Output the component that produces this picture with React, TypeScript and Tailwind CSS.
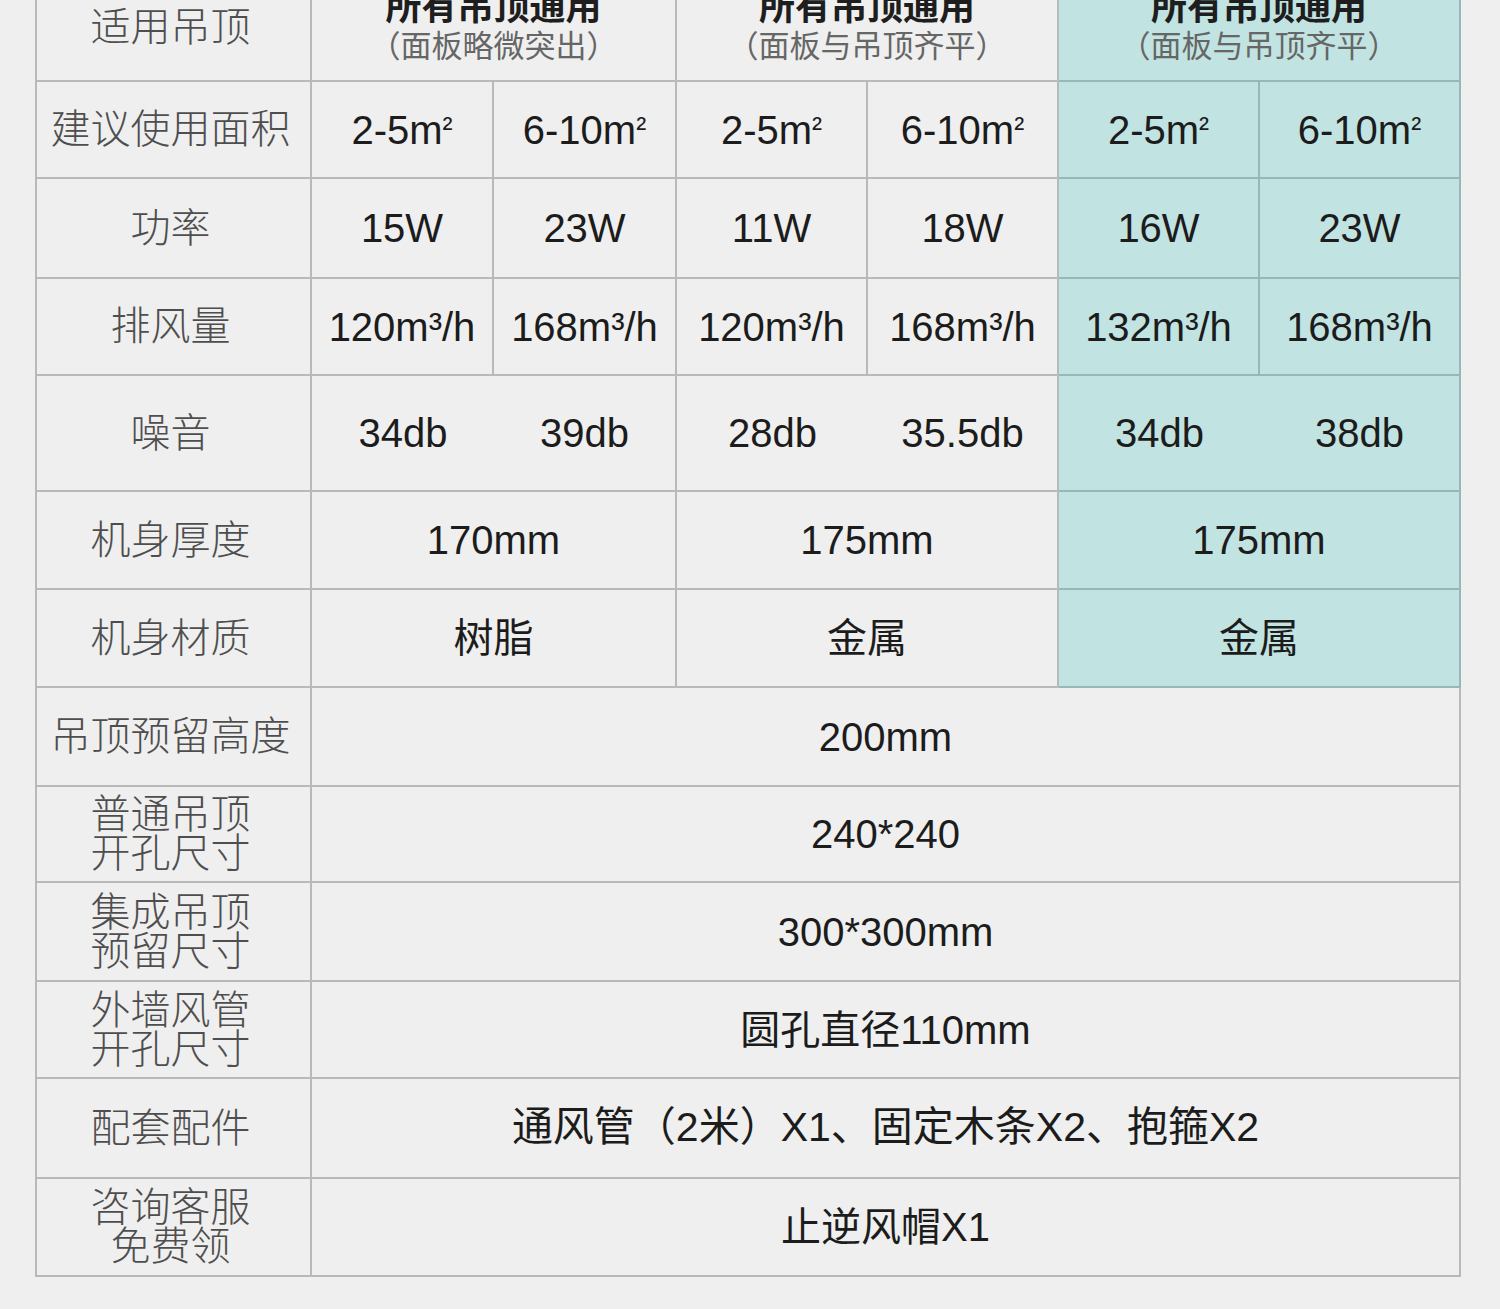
import type { ReactNode } from "react"

type Cell = {
    text: ReactNode
    span?: 1 | 2 | 6
    teal?: boolean
    open?: boolean
}

type Row = { label: string[]; cells: Cell[] }

const spanClass = { 1: "col-span-1", 2: "col-span-2", 6: "col-span-6" }

const Header = ({ sub }: { sub: string }) => (
    <div className="flex flex-col items-center leading-[39px]">
        <span className="text-[36px] font-bold text-[#1e1e1e]">所有吊顶通用</span>
        <span className="text-[31px] text-[#666]">{sub}</span>
    </div>
)

// the squared unit sits small and high in the picture
const Sq = ({ n }: { n: string }) => (
    <span>
        {n}m<span className="relative -top-[6px] text-[30px]">²</span>
    </span>
)

const rows: Row[] = [
    {
        label: ["适用吊顶"],
        cells: [
            { text: <Header sub="（面板略微突出）" />, span: 2 },
            { text: <Header sub="（面板与吊顶齐平）" />, span: 2 },
            { text: <Header sub="（面板与吊顶齐平）" />, span: 2, teal: true },
        ],
    },
    {
        label: ["建议使用面积"],
        cells: [
            { text: <Sq n="2-5" /> }, { text: <Sq n="6-10" /> },
            { text: <Sq n="2-5" /> }, { text: <Sq n="6-10" /> },
            { text: <Sq n="2-5" />, teal: true }, { text: <Sq n="6-10" />, teal: true },
        ],
    },
    {
        label: ["功率"],
        cells: [
            { text: "15W" }, { text: "23W" },
            { text: "11W" }, { text: "18W" },
            { text: "16W", teal: true }, { text: "23W", teal: true },
        ],
    },
    {
        label: ["排风量"],
        cells: [
            { text: "120m³/h" }, { text: "168m³/h" },
            { text: "120m³/h" }, { text: "168m³/h" },
            { text: "132m³/h", teal: true }, { text: "168m³/h", teal: true },
        ],
    },
    {
        label: ["噪音"],
        cells: [
            { text: "34db", open: true }, { text: "39db" },
            { text: "28db", open: true }, { text: "35.5db" },
            { text: "34db", teal: true, open: true }, { text: "38db", teal: true },
        ],
    },
    {
        label: ["机身厚度"],
        cells: [
            { text: "170mm", span: 2 },
            { text: "175mm", span: 2 },
            { text: "175mm", span: 2, teal: true },
        ],
    },
    {
        label: ["机身材质"],
        cells: [
            { text: "树脂", span: 2 },
            { text: "金属", span: 2 },
            { text: "金属", span: 2, teal: true },
        ],
    },
    { label: ["吊顶预留高度"], cells: [{ text: "200mm", span: 6 }] },
    { label: ["普通吊顶", "开孔尺寸"], cells: [{ text: "240*240", span: 6 }] },
    { label: ["集成吊顶", "预留尺寸"], cells: [{ text: "300*300mm", span: 6 }] },
    { label: ["外墙风管", "开孔尺寸"], cells: [{ text: "圆孔直径110mm", span: 6 }] },
    { label: ["配套配件"], cells: [{ text: <span className="text-[41px]">通风管（2米）X1、固定木条X2、抱箍X2</span>, span: 6 }] },
    { label: ["咨询客服", "免费领"], cells: [{ text: "止逆风帽X1", span: 6 }] },
]

export default function App() {
    return (
        <div
            className="min-h-[1309px] overflow-hidden bg-[#efefef]"
            style={{ fontFamily: '"Liberation Sans", "Noto Sans CJK SC", Arial, sans-serif' }}
        >
            <div className="ml-[35px] -mt-[26px] grid w-[1424px] grid-cols-[275px_182px_183px_191px_191px_201px_201px] grid-rows-[108px_97px_100px_97px_116px_98px_98px_99px_96px_99px_97px_100px_98px] border-l-2 border-[#b9b9b9]">
                {rows.map((row, i) => (
                    <div key={i} className="contents">
                        <div className="flex flex-col items-center justify-center border-b-2 border-r-2 border-[#b9b9b9] pr-[6px] text-[40px] font-light leading-[39px] text-[#4e4e4e]">
                            {row.label.map((l) => (
                                <span key={l}>{l}</span>
                            ))}
                        </div>
                        {row.cells.map((c, j) => (
                            <div
                                key={j}
                                className={[
                                    "flex items-center justify-center whitespace-nowrap border-b-2 text-[40px] text-[#1c1c1c]",
                                    spanClass[c.span ?? 1],
                                    c.open ? "" : "border-r-2",
                                    c.teal ? "border-[#98b8b6] bg-[#c1e3e1]" : "border-[#b9b9b9]",
                                ].join(" ")}
                            >
                                {c.text}
                            </div>
                        ))}
                    </div>
                ))}
            </div>
        </div>
    )
}
